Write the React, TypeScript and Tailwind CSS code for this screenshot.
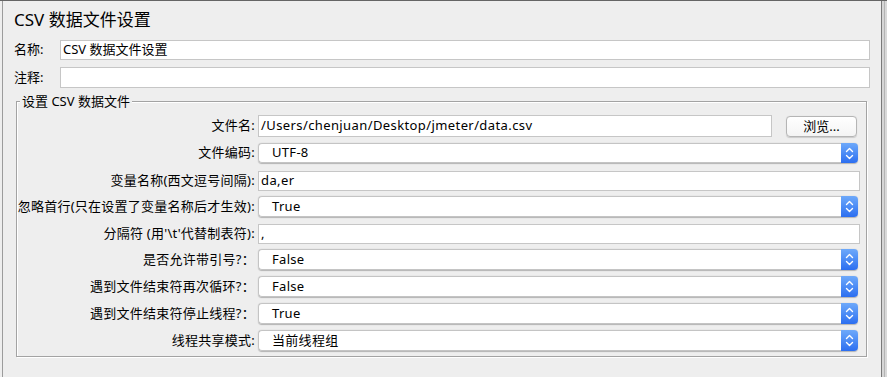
import React from 'react';

const FONT = { fontFamily: '"Noto Sans", "Noto Sans CJK SC", sans-serif' };

type Row = {
  kind: 'file' | 'input' | 'select';
  label: string;
  value: string;
  mt: string;
  h: string;
};

const ROWS: Row[] = [
  { kind: 'file', label: '文件名:', value: '/Users/chenjuan/Desktop/jmeter/data.csv', mt: 'mt-0', h: 'h-[22px]' },
  { kind: 'select', label: '文件编码:', value: 'UTF-8', mt: 'mt-[6px]', h: 'h-[20px]' },
  { kind: 'input', label: '变量名称(西文逗号间隔):', value: 'da,er', mt: 'mt-[8px]', h: 'h-[20px]' },
  { kind: 'select', label: '忽略首行(只在设置了变量名称后才生效):', value: 'True', mt: 'mt-[5px]', h: 'h-[21px]' },
  { kind: 'input', label: "分隔符 (用'\\t'代替制表符):", value: ',', mt: 'mt-[7px]', h: 'h-[20px]' },
  { kind: 'select', label: '是否允许带引号?：', value: 'False', mt: 'mt-[5px]', h: 'h-[21px]' },
  { kind: 'select', label: '遇到文件结束符再次循环?：', value: 'False', mt: 'mt-[6px]', h: 'h-[21px]' },
  { kind: 'select', label: '遇到文件结束符停止线程?：', value: 'True', mt: 'mt-[6px]', h: 'h-[21px]' },
  { kind: 'select', label: '线程共享模式:', value: '当前线程组', mt: 'mt-[6px]', h: 'h-[21px]' },
];

function Stepper() {
  return (
    <div className="w-[17px] h-full rounded-r-[4px] bg-gradient-to-b from-[#6ea9fa] to-[#2c6ef0] flex items-center justify-center">
      <svg width="9" height="13" viewBox="0 0 9 13" fill="none" stroke="white" strokeWidth="1.4" strokeLinecap="round" strokeLinejoin="round">
        <path d="M1.5 4.5 L4.5 1.5 L7.5 4.5" />
        <path d="M1.5 8.5 L4.5 11.5 L7.5 8.5" />
      </svg>
    </div>
  );
}

function Select({ value }: { value: string }) {
  return (
    <div className="flex-1 h-full mr-[8px] flex rounded-[4px] shadow-[0_0.5px_1px_rgba(0,0,0,0.25)]">
      <div className="flex-1 h-full bg-white border border-[#c4c4c4] border-r-0 rounded-l-[4px] flex items-center pl-[13px] text-[13px] tracking-[0.3px] text-black">
        {value}
      </div>
      <Stepper />
    </div>
  );
}

function TextBox({ value, className = '' }: { value: string; className?: string }) {
  return (
    <div className={`h-full bg-white border border-[#c6c6c6] flex items-center pl-[2px] text-[13px] tracking-[0.4px] text-black ${className}`}>
      {value}
    </div>
  );
}

export default function App() {
  return (
    <div className="w-[887px] h-[377px] bg-[#eeeeee] flex border-t border-[#656565] overflow-hidden" style={FONT}>
      {/* main panel */}
      <div className="flex-1 ml-[2px] border-l border-[#9c9c9c] border-r border-r-[#7a7a7a] flex flex-col">
        <div className="pl-[11px] pt-[7px] h-[31px] text-[17px] leading-[24px] text-black">CSV 数据文件设置</div>

        <div className="flex items-center mt-[8px] h-[20px] pl-[11px]">
          <span className="w-[46px] text-[13px] text-black">名称:</span>
          <TextBox value="CSV 数据文件设置" className="w-[810px] tracking-normal" />
        </div>
        <div className="flex items-center mt-[7px] h-[21px] pl-[11px]">
          <span className="w-[46px] text-[13px] text-black">注释:</span>
          <TextBox value="" className="w-[810px]" />
        </div>

        {/* group box */}
        <div className="relative mt-[13px] ml-[13px] w-[851px] border border-[#a3a3a3] shadow-[inset_1px_1px_0_white,1px_1px_0_white] pt-[13px] pb-[5px] flex flex-col">
          <span className="absolute left-[3px] top-[-10px] px-[2px] bg-[#eeeeee] text-[13px] leading-[18px] text-black">设置 CSV 数据文件</span>
          {ROWS.map((r) => (
            <div key={r.label} className={`flex items-center ${r.mt} ${r.h}`}>
              <div className="w-[241px] shrink-0 text-right pr-[3px] text-[13px] tracking-[0.25px] text-black whitespace-nowrap">{r.label}</div>
              {r.kind === 'file' && (
                <>
                  <TextBox value={r.value} className="w-[514px]" />
                  <button className="ml-[14px] w-[71px] h-[21px] rounded-[4px] border border-[#b5b5b5] bg-gradient-to-b from-white to-[#f4f4f4] text-[13px] text-black shadow-[0_0.5px_1px_rgba(0,0,0,0.15)]">
                    浏览...
                  </button>
                </>
              )}
              {r.kind === 'input' && <TextBox value={r.value} className="flex-1 mr-[6px]" />}
              {r.kind === 'select' && <Select value={r.value} />}
            </div>
          ))}
        </div>
      </div>

      {/* right edge strip */}
      <div className="w-[5px] flex">
        <div className="w-[2px] bg-[#d6d6d6]" />
        <div className="w-[1px] bg-[#b4b4b4]" />
        <div className="w-[2px] bg-[#d9d9d9]" />
      </div>
    </div>
  );
}
